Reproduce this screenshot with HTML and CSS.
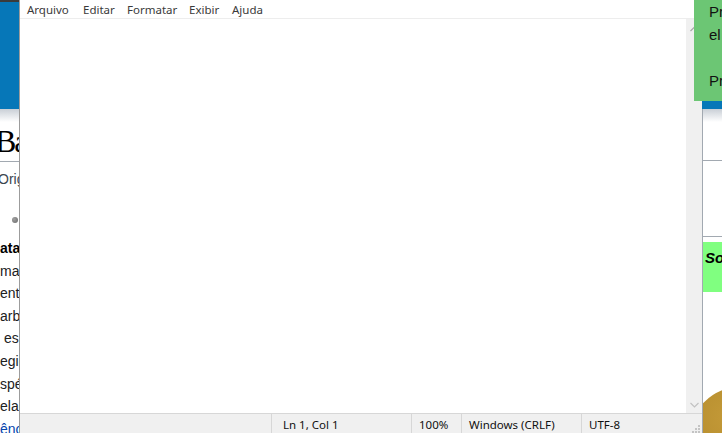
FILE: index.html
```html
<!DOCTYPE html>
<html lang="pt">
<head>
<meta charset="utf-8">
<title>Sem título - Bloco de Notas</title>
<link rel="stylesheet" href="styles.css">
</head>
<body>
<div class="page">
  <div class="topline"></div>
  <header class="masthead"></header>
  <div class="content">
    <main class="article">
      <div class="shade"></div>
      <h1 class="title">Baleia-azul</h1>
      <p class="origin">Origem: Wikipédia, a enciclopédia livre.</p>
      <div class="dots"><span class="dot"></span></div>
      <div class="lines">
        <p class="lead">ata</p>
        <p>ma espécie de mamífero marinho</p>
        <p>entífico Balaenoptera musculus</p>
        <p>arbotana que chega a medir</p>
        <p>&nbsp;esp<span class="orange">écie</span> ameaçada</p>
        <p>egiões polares e tropicais</p>
        <p>spécies de krill</p>
        <p>elação com outras baleias</p>
        <p class="link">ência</p>
      </div>
    </main>
    <aside class="side">
      <div class="side-shade"></div>
      <div class="side-box one"></div>
      <div class="side-box two"></div>
      <div class="side-green">So</div>
      <div class="medal"></div>
    </aside>
  </div>

  <div class="notice">
    <p>Pr</p>
    <p>el</p>
    <p>&nbsp;</p>
    <p>Pr</p>
  </div>

  <div class="notepad">
    <nav class="menubar">
      <span>Arquivo</span>
      <span>Editar</span>
      <span>Formatar</span>
      <span>Exibir</span>
      <span>Ajuda</span>
    </nav>
    <div class="editor">
      <div class="textarea"></div>
      <div class="scrollbar">
        <svg class="chev up" width="9" height="6" viewBox="0 0 9 6"><polyline points="0.5,5 4.5,1 8.5,5" fill="none" stroke="#a8a8a8" stroke-width="1.2"/></svg>
        <svg class="chev down" width="9" height="6" viewBox="0 0 9 6"><polyline points="0.5,1 4.5,5 8.5,1" fill="none" stroke="#c2c2c2" stroke-width="1.2"/></svg>
      </div>
    </div>
    <footer class="statusbar">
      <div class="cell blank"></div>
      <div class="cell pos">Ln 1, Col 1</div>
      <div class="cell zoom">100%</div>
      <div class="cell eol">Windows (CRLF)</div>
      <div class="cell enc">
        <span>UTF-8</span>
        <svg class="grip" width="9" height="9" viewBox="0 0 9 9">
          <rect x="7" y="1" width="2" height="2" fill="#c4c4c4"/>
          <rect x="4" y="4" width="2" height="2" fill="#c4c4c4"/>
          <rect x="7" y="4" width="2" height="2" fill="#c4c4c4"/>
          <rect x="1" y="7" width="2" height="2" fill="#c4c4c4"/>
          <rect x="4" y="7" width="2" height="2" fill="#c4c4c4"/>
          <rect x="7" y="7" width="2" height="2" fill="#c4c4c4"/>
        </svg>
      </div>
    </footer>
  </div>
</div>
</body>
</html>
```

FILE: styles.css
```css
html, body {
  margin: 0;
  padding: 0;
}

body {
  width: 722px;
  height: 433px;
  overflow: hidden;
  background: #fff;
}

.page {
  position: relative;
  width: 722px;
  height: 433px;
  overflow: hidden;
  font-family: "Liberation Sans", Arial, sans-serif;
  color: #202122;
}

p {
  margin: 0;
}

.topline {
  height: 2px;
  background: #3b3b3b;
}

.masthead {
  height: 107px;
  background: #0677b8;
}

.content {
  display: grid;
  grid-template-columns: 702px 20px;
}

.article {
  overflow: hidden;
  white-space: nowrap;
}

.shade,
.side-shade {
  height: 13px;
  background: linear-gradient(#c9cfd6, #ffffff);
}

.title {
  margin: 0;
  height: 39px;
  font-family: "Liberation Serif", "Times New Roman", serif;
  font-weight: normal;
  font-size: 32px;
  line-height: 39px;
  text-indent: -5px;
  letter-spacing: -2px;
  color: #000;
  border-bottom: 1px solid #a2a9b1;
}

.origin {
  margin-top: 7px;
  font-size: 14px;
  line-height: 20px;
  text-indent: -2px;
  color: #3b4650;
}

.dots {
  height: 48px;
  padding-left: 12px;
  display: flex;
  align-items: flex-start;
}

.dot {
  width: 6px;
  height: 6px;
  margin-top: 28px;
  border-radius: 50%;
  background: radial-gradient(circle at 35% 35%, #a0a0a0, #6a6a6a);
}

.lines {
  font-size: 14px;
  line-height: 22.6px;
  color: #202122;
}

.lines .lead {
  font-weight: bold;
  color: #000;
}

.lines .orange {
  color: #c8860a;
}

.lines .link {
  color: #0645ad;
}

.side {
  border-left: 1px solid #a2a9b1;
  overflow: hidden;
  height: 324px;
}

.side-box {
  border-bottom: 1px solid #a2a9b1;
}

.side-box.one {
  height: 38px;
}

.side-box.two {
  height: 75px;
}

.side-green {
  margin-top: 5px;
  height: 50px;
  padding-left: 2px;
  background: #80ff80;
  font-size: 15px;
  font-weight: bold;
  font-style: italic;
  line-height: 32px;
  color: #000;
}

.medal {
  margin-top: 95px;
  margin-left: -13px;
  width: 100px;
  height: 100px;
  border-radius: 50%;
  background: radial-gradient(circle at 40% 30%, #c49a38, #a98125);
}

.notice {
  position: absolute;
  top: 0;
  left: 694px;
  width: 40px;
  height: 101px;
  padding: 0 0 0 15px;
  background: #6cc674;
  font-size: 15px;
  line-height: 23px;
  color: #111;
  white-space: nowrap;
  z-index: 3;
}

.notepad {
  position: absolute;
  top: 0;
  left: 19px;
  width: 682px;
  height: 433px;
  border-left: 1px solid #9c9c9c;
  background: #fff;
  display: flex;
  flex-direction: column;
  font-family: "Noto Sans", "Segoe UI", sans-serif;
  z-index: 2;
}

.menubar {
  height: 18px;
  border-bottom: 1px solid #ededed;
  padding-left: 7px;
  display: grid;
  grid-template-columns: 56px 44px 62px 43px auto;
  font-size: 11.5px;
  line-height: 20px;
  color: #3a3a3a;
}

.editor {
  flex: 1;
  display: flex;
}

.textarea {
  flex: 1;
  background: #fff;
}

.scrollbar {
  width: 16px;
  background: #f0f0f0;
  display: flex;
  flex-direction: column;
  justify-content: space-between;
  align-items: center;
  padding: 7px 0 5px;
}

.chev {
  display: block;
}

.statusbar {
  height: 19px;
  border-top: 1px solid #d7d7d7;
  background: #f0f0f0;
  display: flex;
  font-size: 11.5px;
  line-height: 17px;
  color: #111;
}

.cell {
  border-left: 1px solid #d7d7d7;
  padding-left: 7px;
  padding-top: 2px;
  white-space: nowrap;
}

.cell.blank {
  width: 251px;
  padding: 0;
  border-left: none;
}

.cell.pos {
  width: 128px;
  padding-left: 11px;
}

.cell.zoom {
  width: 42px;
}

.cell.eol {
  width: 112px;
}

.cell.enc {
  flex: 1;
  display: flex;
  justify-content: space-between;
  align-items: flex-end;
  padding-right: 2px;
}

.cell.enc span {
  align-self: flex-start;
}

.grip {
  display: block;
}
```
